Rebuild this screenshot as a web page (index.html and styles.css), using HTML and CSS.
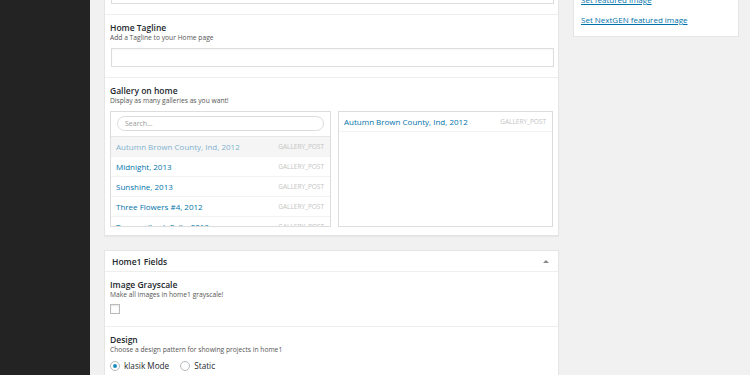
FILE: index.html
```html
<!DOCTYPE html>
<html lang="en">
<head>
    <meta charset="UTF-8">
    <title>Edit Page</title>
    <link rel="stylesheet" href="styles.css">
</head>
<body>

<div class="adminmenu"></div>

<div class="content">
    <div class="main">
        <div class="panel first">
            <div class="field">
                <input type="text" class="text_input"/>
            </div>
            <div class="field">
                <div class="label">Home Tagline</div>
                <div class="desc">Add a Tagline to your Home page</div>
                <input type="text" class="text_input"/>
            </div>
            <div class="field last">
                <div class="label">Gallery on home</div>
                <div class="desc">Display as many galleries as you want!</div>
                <div class="relation">
                    <div class="rel_box">
                        <div class="rel_search">
                            <input type="text" placeholder="Search..."/>
                        </div>
                        <ul class="rel_list">
                            <li class="picked"><span>Autumn Brown County, Ind, 2012</span><em>gallery_post</em></li>
                            <li><span>Midnight, 2013</span><em>gallery_post</em></li>
                            <li><span>Sunshine, 2013</span><em>gallery_post</em></li>
                            <li><span>Three Flowers #4, 2012</span><em>gallery_post</em></li>
                            <li><span>Trummelbach Falls, 2013</span><em>gallery_post</em></li>
                        </ul>
                    </div>
                    <div class="rel_box chosen">
                        <ul class="rel_list">
                            <li><span>Autumn Brown County, Ind, 2012</span><em>gallery_post</em></li>
                        </ul>
                    </div>
                </div>
            </div>
        </div>

        <div class="panel">
            <div class="panel_head">
                <h3>Home1 Fields</h3>
                <span class="toggle"></span>
            </div>
            <div class="field">
                <div class="label">Image Grayscale</div>
                <div class="desc">Make all images in home1 grayscale!</div>
                <span class="checkbox"></span>
            </div>
            <div class="field">
                <div class="label">Design</div>
                <div class="desc">Choose a design pattern for showing projects in home1</div>
                <div class="radios">
                    <label><span class="radio on"></span>klasik Mode</label>
                    <label><span class="radio"></span>Static</label>
                </div>
            </div>
        </div>
    </div>

    <div class="side">
        <div class="side_box">
            <a href="#">Set featured image</a>
            <a href="#">Set NextGEN featured image</a>
        </div>
    </div>
</div>

</body>
</html>
```

FILE: styles.css
```css
body {
    margin: 0;
    height: 375px;
    overflow: hidden;
    display: flex;
    font-family: "Open Sans", "Liberation Sans", sans-serif;
    color: #23282d;
    background-color: #f1f1f1;
}

.adminmenu {
    width: 90px;
    background-color: #232323;
}

.content {
    flex: 1;
    display: flex;
    align-items: flex-start;
    gap: 14px;
    padding: 0 11px 0 14px;
}

.main {
    width: 455px;
    display: flex;
    flex-direction: column;
    gap: 14px;
}

.panel {
    background-color: white;
    border: 1px solid #e5e5e5;
    box-shadow: 0 1px 1px rgba(0, 0, 0, 0.04);
}

.panel.first {
    margin-top: -20px;
    border-top: none;
}

.field {
    padding: 8px 5px 10px 5px;
    border-top: 1px solid #eeeeee;
}

.panel.first .field:first-child {
    border-top: none;
    padding-top: 0;
}

.panel.first .field:first-child .text_input {
    margin-top: 0;
    height: 24px;
}

.field.last {
    padding-bottom: 8px;
}

.label {
    font-size: 8.5px;
    font-weight: 600;
    line-height: 10px;
}

.desc {
    font-size: 6.7px;
    line-height: 9px;
    color: #555;
}

.text_input {
    display: block;
    box-sizing: border-box;
    width: 443px;
    height: 19px;
    margin: 6px 0 0 1px;
    border: 1px solid #dddddd;
    box-shadow: inset 0 1px 2px rgba(0, 0, 0, 0.04);
}

.relation {
    display: flex;
    gap: 7px;
    margin-top: 6px;
}

.rel_box {
    width: 219px;
    height: 114px;
    border: 1px solid #dddddd;
    overflow: hidden;
}

.rel_box.chosen {
    width: 213px;
}

.rel_search {
    padding: 4px 6px 5px 6px;
    border-bottom: 1px solid #e6e6e6;
    background-color: #fff;
}

.rel_search input {
    display: block;
    box-sizing: border-box;
    width: 100%;
    height: 15px;
    border: 1px solid #dcdcdc;
    border-radius: 8px;
    padding: 0 7px;
    font-family: "Open Sans", "Liberation Sans", sans-serif;
    font-size: 7px;
}

.rel_search input::placeholder {
    color: #999;
}

.rel_list {
    list-style: none;
    margin: 0;
    padding: 0;
}

.rel_list li {
    display: flex;
    justify-content: space-between;
    align-items: center;
    height: 19px;
    padding: 0 6px 0 5px;
    border-bottom: 1px solid #f2f2f2;
}

.rel_list span {
    font-size: 8px;
    line-height: 10px;
    color: #0073aa;
}

.rel_list em {
    font-style: normal;
    text-transform: uppercase;
    font-size: 6.5px;
    color: #c4c4c4;
}

.rel_list li.picked {
    background-color: #f5f5f5;
}

.rel_list li.picked span {
    color: #7fb3cf;
}

.panel_head {
    display: flex;
    justify-content: space-between;
    align-items: center;
    height: 20px;
    padding: 0 9px 0 7px;
    border-bottom: 1px solid #eeeeee;
}

.panel_head h3 {
    margin: 0;
    font-size: 8.5px;
    font-weight: 600;
}

.toggle {
    width: 0;
    height: 0;
    border-left: 3px solid transparent;
    border-right: 3px solid transparent;
    border-bottom: 3px solid #888;
}

.panel_head + .field {
    border-top: none;
    padding-bottom: 12px;
}

.checkbox {
    display: block;
    width: 8px;
    height: 8px;
    margin-top: 5px;
    border: 1px solid #bbbbbb;
    box-shadow: inset 0 1px 2px rgba(0, 0, 0, 0.1);
}

.radios {
    display: flex;
    gap: 11px;
    margin-top: 6px;
}

.radios label {
    display: flex;
    align-items: center;
    gap: 4px;
    font-size: 8.2px;
}

.radio {
    box-sizing: border-box;
    width: 10px;
    height: 10px;
    border: 1px solid #b4b9be;
    border-radius: 50%;
    display: flex;
    align-items: center;
    justify-content: center;
}

.radio.on::after {
    content: "";
    width: 4px;
    height: 4px;
    border-radius: 50%;
    background-color: #1e8cbe;
}

.side {
    width: 166px;
}

.side_box {
    margin-top: -12px;
    padding: 6px 7px 10px 7px;
    background-color: white;
    border: 1px solid #e5e5e5;
    border-top: none;
    display: flex;
    flex-direction: column;
    gap: 8px;
}

.side_box a {
    font-size: 8px;
    line-height: 12px;
    color: #0073aa;
}
```
